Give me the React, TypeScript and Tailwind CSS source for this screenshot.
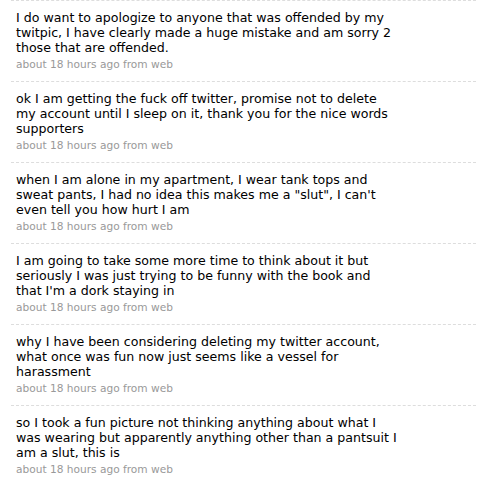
import React from "react";

const tweets = [
  "I do want to apologize to anyone that was offended by my twitpic, I have clearly made a huge mistake and am sorry 2 those that are offended.",
  "ok I am getting the fuck off twitter, promise not to delete my account until I sleep on it, thank you for the nice words supporters",
  "when I am alone in my apartment, I wear tank tops and sweat pants, I had no idea this makes me a \"slut\", I can't even tell you how hurt I am",
  "I am going to take some more time to think about it but seriously I was just trying to be funny with the book and that I'm a dork staying in",
  "why I have been considering deleting my twitter account, what once was fun now just seems like a vessel for harassment",
  "so I took a fun picture not thinking anything about what I was wearing but apparently anything other than a pantsuit I am a slut, this is",
];

export default function App() {
  return (
    <div className="w-[485px] h-[486px] overflow-hidden bg-white" style={{ fontFamily: '"DejaVu Sans", Verdana, sans-serif' }}>
      <ul className="ml-[11px] w-[465px]">
        {tweets.map((t, i) => (
          <li key={i} className="border-t border-dashed border-[#dddddd] h-[81px] pl-[5px] pt-[9px]">
            <p className="w-[383px] text-[12.6px] leading-[15px] text-black">{t}</p>
            <p className="text-[10.6px] leading-[14px] mt-[2px] text-[#999999]">about 18 hours ago from web</p>
          </li>
        ))}
      </ul>
    </div>
  );
}
